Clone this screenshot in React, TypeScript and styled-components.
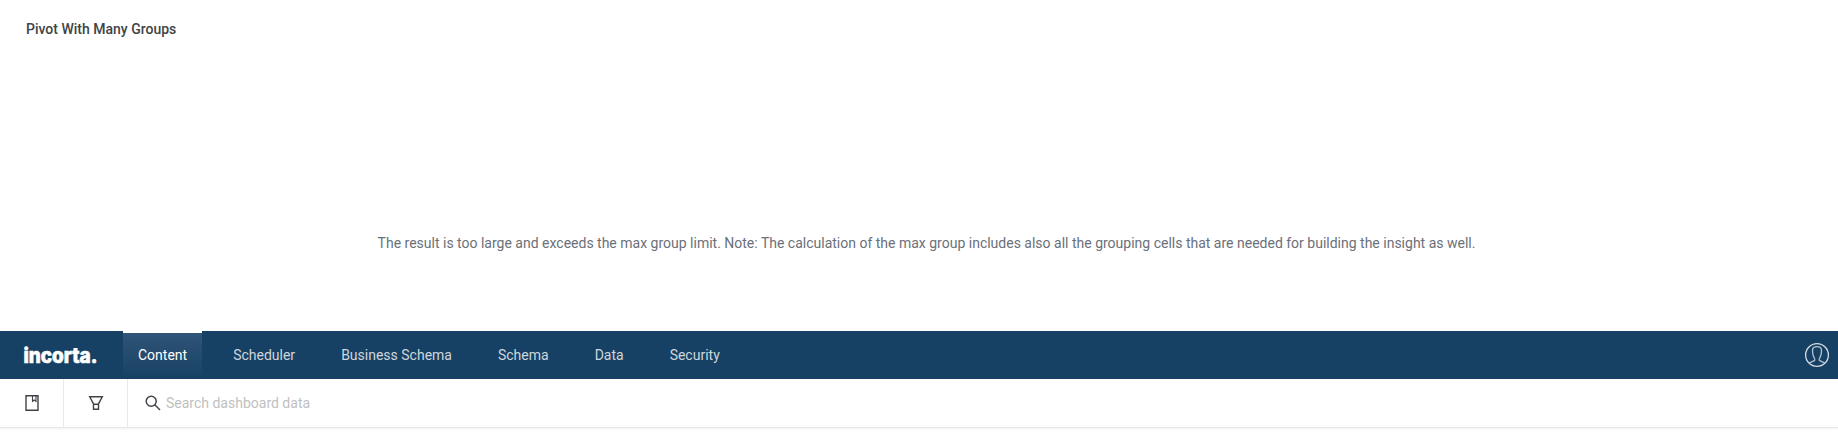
import React from "react";
import styled, { createGlobalStyle, css } from "styled-components";

const GlobalStyle = createGlobalStyle`
  * { box-sizing: border-box; }
  body { margin: 0; background: #fff; font-family: Roboto, "Liberation Sans", sans-serif; }
`;

const Page = styled.div`
  height: 448px;
  display: flex;
  flex-direction: column;
  overflow: hidden;
`;

const Insight = styled.section`
  height: 331px;
  padding: 19px 11px 0 26px;
  display: flex;
  flex-direction: column;
`;

const InsightTitle = styled.h2`
  margin: 0;
  font-size: 14px;
  line-height: 20px;
  font-weight: 500;
  color: #404347;
`;

const InsightMessage = styled.p`
  margin: 194px 0 0;
  text-align: center;
  font-size: 14px;
  line-height: 20px;
  color: #6b7079;
`;

const Header = styled.header`
  height: 48px;
  flex: none;
  display: flex;
  align-items: stretch;
  background: #174164;
`;

const Brand = styled.div`
  width: 123px;
  padding: 14px 0 0 24px;
  flex: none;
`;

const Nav = styled.nav`
  flex: 1;
  display: flex;
  gap: 16px;
`;

const Tab = styled.a<{ $active?: boolean }>`
  padding: 0 15px;
  font-size: 14px;
  line-height: 45px;
  color: #cfd6dc;
  border-top: 2px solid transparent;
  white-space: nowrap;
  ${(p) =>
    p.$active &&
    css`
      color: #fff;
      border-top-color: #fff;
      background: linear-gradient(#2f5577, #174164) padding-box;
    `}
`;

const Account = styled.div`
  padding: 12px 9px 0 0;
`;

const Toolbar = styled.div`
  height: 49px;
  flex: none;
  display: flex;
  background: #fff;
  border-bottom: 1px solid #e9e9eb;
  box-shadow: 0 1px 2px rgba(0, 0, 0, 0.06);
`;

const ToolButton = styled.div`
  width: 64px;
  display: flex;
  align-items: center;
  justify-content: center;
  border-right: 1px solid #e9eaee;
`;

const Search = styled.label`
  flex: 1;
  display: flex;
  align-items: center;
  gap: 5px;
  padding-left: 17px;
`;

const SearchInput = styled.input`
  width: 300px;
  padding: 0;
  border: 0;
  outline: 0;
  background: none;
  font: 14px/20px Roboto, "Liberation Sans", sans-serif;
  &::placeholder { color: #bfbfbf; opacity: 1; }
`;

const Icon = styled.svg`
  display: block;
  fill: none;
  overflow: visible;
`;

const TABS = ["Content", "Scheduler", "Business Schema", "Schema", "Data", "Security"];

export default function App() {
  return (
    <>
      <GlobalStyle />
      <Page>
        <Insight>
          <InsightTitle>Pivot With Many Groups</InsightTitle>
          <InsightMessage>
            The result is too large and exceeds the max group limit. Note: The calculation of the max group
            includes also all the grouping cells that are needed for building the insight as well.
          </InsightMessage>
        </Insight>
        <Header>
          <Brand>
            <Icon width="74" height="22" viewBox="0 0 74 22">
              <text
                x="-0.6"
                y="17.5"
                textLength="74"
                lengthAdjust="spacingAndGlyphs"
                fontFamily="Inter, sans-serif"
                fontWeight="800"
                fontSize="20.5"
                fill="#fff"
                stroke="#fff"
                strokeWidth="0.7"
              >
                incorta.
              </text>
            </Icon>
          </Brand>
          <Nav>
            {TABS.map((tab, i) => (
              <Tab key={tab} $active={i === 0}>{tab}</Tab>
            ))}
          </Nav>
          <Account>
            <Icon width="24" height="24" viewBox="0 0 24 24" stroke="#d3dce4">
              <circle cx="12" cy="12" r="11.4" strokeWidth="1.3" />
              <path
                strokeWidth="1.3"
                strokeOpacity="0.85"
                d="M4.3 20.3C5.5 18.8 9.4 18.4 9.8 17C10.1 15.6 8 13.6 7.8 10.8C7.6 8.5 7.4 7.5 7.6 6.5C8 4.4 9.8 3.7 12 3.7C14.2 3.7 16 4.4 16.4 6.5C16.6 7.5 16.4 8.5 16.2 10.8C16 13.6 13.9 15.6 14.2 17C14.6 18.4 18.5 18.8 19.7 20.3"
              />
            </Icon>
          </Account>
        </Header>
        <Toolbar>
          <ToolButton>
            <Icon width="14" height="16" viewBox="0 0 14 16" stroke="#404347">
              <path d="M1 .7H13V15.3H1Z" strokeWidth="1.4" />
              <path d="M7.5 1V6.3L9.25 5L11 6.3V1" strokeWidth="1.1" />
            </Icon>
          </ToolButton>
          <ToolButton>
            <Icon width="14" height="14" viewBox="0 0 14 14" stroke="#404347" strokeWidth="1.4">
              <path d="M.7 .8H13.3L9.5 7.8V13.2H4.5V7.8ZM4.5 8.3H9.5" />
            </Icon>
          </ToolButton>
          <Search>
            <Icon width="16" height="16" viewBox="0 0 16 16" stroke="#404347" strokeWidth="1.5">
              <circle cx="6.2" cy="6.2" r="5" />
              <path d="M9.8 9.8L15 15" />
            </Icon>
            <SearchInput placeholder="Search dashboard data" />
          </Search>
        </Toolbar>
      </Page>
    </>
  );
}
